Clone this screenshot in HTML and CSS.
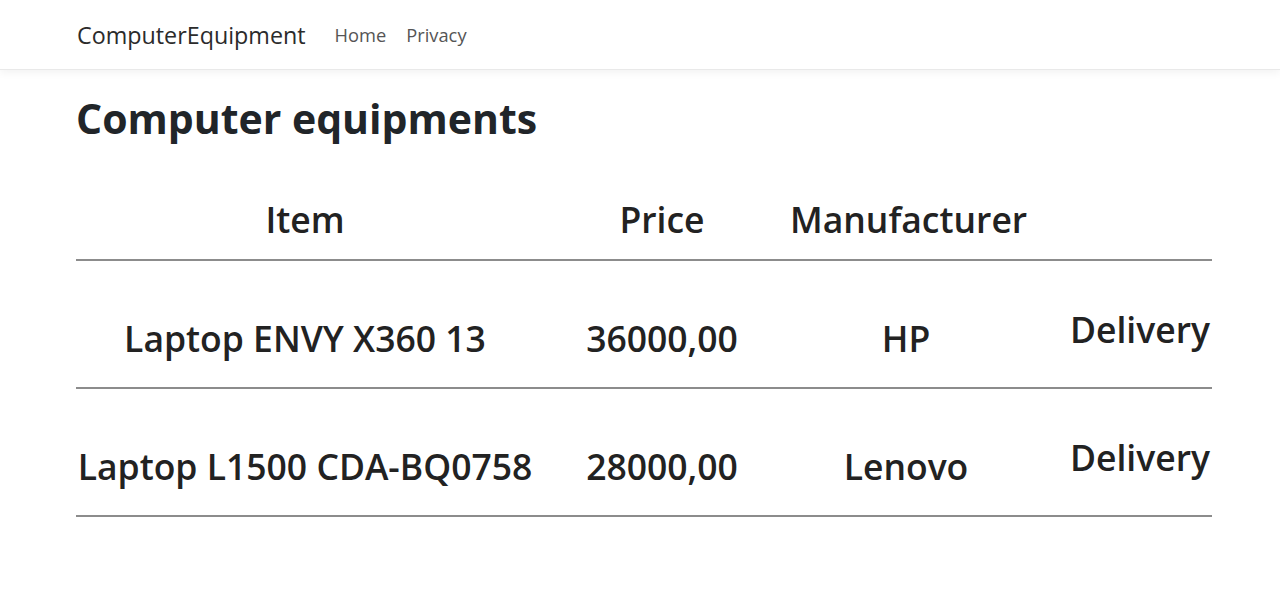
FILE: index.html
```html
<!DOCTYPE html>
<html lang="en">
<head>
<meta charset="utf-8">
<title>ComputerEquipment</title>
<link rel="stylesheet" href="styles.css">
</head>
<body>
<header class="navbar">
  <div class="container nav-inner">
    <a class="brand" href="#">ComputerEquipment</a>
    <nav class="nav-links">
      <a href="#">Home</a>
      <a href="#">Privacy</a>
    </nav>
  </div>
</header>
<main class="container">
  <h1 class="title">Computer equipments</h1>
  <table class="equip">
    <colgroup>
      <col class="c1"><col class="c2"><col class="c3"><col class="c4">
    </colgroup>
    <thead>
      <tr><th>Item</th><th>Price</th><th>Manufacturer</th><th></th></tr>
    </thead>
    <tbody>
      <tr><td>Laptop ENVY X360 13</td><td>36000,00</td><td>HP</td><td class="act"><a href="#">Delivery</a></td></tr>
      <tr><td>Laptop L1500 CDA-BQ0758</td><td>28000,00</td><td>Lenovo</td><td class="act"><a href="#">Delivery</a></td></tr>
    </tbody>
  </table>
</main>
</body>
</html>
```
FILE: styles.css
```css
* { box-sizing: border-box; }
html, body { margin: 0; padding: 0; }
body {
  font-family: "Open Sans", "Noto Sans", sans-serif;
  color: #212529;
  background: #fff;
}
a { text-decoration: none; color: inherit; }
.container {
  width: 1136px;
  margin: 0 0 0 76px;
}
.navbar {
  height: 70px;
  background: #fff;
  border-bottom: 1px solid #e9e9e9;
  box-shadow: 0 3px 8px rgba(0,0,0,.05);
}
.nav-inner {
  height: 100%;
  display: flex;
  align-items: center;
  padding-left: 1px;
}
.brand {
  font-size: 23.3px;
  color: #2b2b2b;
  margin-right: 29px;
}
.nav-links { display: flex; gap: 20px; }
.nav-links a { font-size: 18.3px; color: #555; }
.title {
  font-size: 41px;
  font-weight: 700;
  margin: 20px 0 0 0;
  line-height: 56px;
  color: #212529;
}
.equip {
  width: 100%;
  border-collapse: collapse;
  margin-top: 34px;
  table-layout: fixed;
}
.c1 { width: 458px; }
.c2 { width: 256px; }
.c3 { width: 232px; }
.c4 { width: 190px; }
.equip th, .equip td {
  text-align: center;
  font-size: 35.5px;
  font-weight: 600;
  padding: 0;
  border-bottom: 2px solid #8c8c8c;
  white-space: nowrap;
  color: #222;
}
.equip th { height: 80px; vertical-align: middle; padding-bottom: 2px; }
.equip td { height: 128px; vertical-align: middle; padding-top: 28px; }
.equip td.act { text-align: right; padding-right: 2px; padding-top: 10px; }
.equip td.act a { color: #222; }
```
